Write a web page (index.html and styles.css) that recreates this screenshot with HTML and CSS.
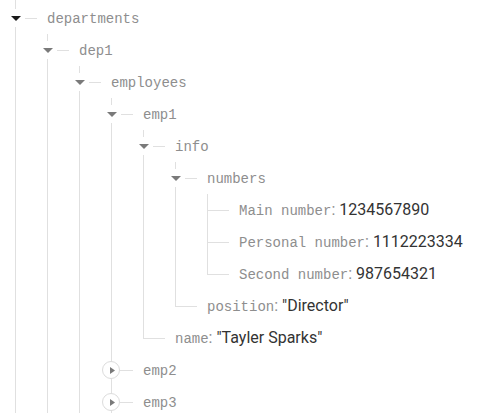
FILE: index.html
```html
<!DOCTYPE html>
<html lang="en">
<head>
<meta charset="utf-8">
<title>Database tree</title>
<link rel="stylesheet" href="styles.css">
</head>
<body>
<div class="tree">
  <div class="node">
    <div class="row">
      <span class="toggle open active"><svg width="10" height="5" viewBox="0 0 10 5"><polygon points="0,0 10,0 5,5"/></svg></span><span class="dash"></span>
      <span class="label"><span class="key">departments</span></span>
    </div>
    <div class="children">
      <div class="node">
        <div class="row">
          <span class="toggle open"><svg width="10" height="5" viewBox="0 0 10 5"><polygon points="0,0 10,0 5,5"/></svg></span><span class="dash"></span>
          <span class="label"><span class="key">dep1</span></span>
        </div>
        <div class="children">
          <div class="node">
            <div class="row">
              <span class="toggle open"><svg width="10" height="5" viewBox="0 0 10 5"><polygon points="0,0 10,0 5,5"/></svg></span><span class="dash"></span>
              <span class="label"><span class="key">employees</span></span>
            </div>
            <div class="children">
              <div class="node">
                <div class="row">
                  <span class="toggle open"><svg width="10" height="5" viewBox="0 0 10 5"><polygon points="0,0 10,0 5,5"/></svg></span><span class="dash"></span>
                  <span class="label"><span class="key">emp1</span></span>
                </div>
                <div class="children">
                  <div class="node">
                    <div class="row">
                      <span class="toggle open"><svg width="10" height="5" viewBox="0 0 10 5"><polygon points="0,0 10,0 5,5"/></svg></span><span class="dash"></span>
                      <span class="label"><span class="key">info</span></span>
                    </div>
                    <div class="children">
                      <div class="node">
                        <div class="row">
                          <span class="toggle open"><svg width="10" height="5" viewBox="0 0 10 5"><polygon points="0,0 10,0 5,5"/></svg></span><span class="dash"></span>
                          <span class="label"><span class="key">numbers</span></span>
                        </div>
                        <div class="children">
                          <div class="node">
                            <div class="row">
                              <span class="leaf"></span>
                              <span class="label"><span class="key">Main number</span><span class="colon">:</span> <span class="value">1234567890</span></span>
                            </div>
                          </div>
                          <div class="node">
                            <div class="row">
                              <span class="leaf"></span>
                              <span class="label"><span class="key">Personal number</span><span class="colon">:</span> <span class="value">1112223334</span></span>
                            </div>
                          </div>
                          <div class="node last">
                            <div class="row">
                              <span class="leaf"></span>
                              <span class="label"><span class="key">Second number</span><span class="colon">:</span> <span class="value">987654321</span></span>
                            </div>
                          </div>
                        </div>
                      </div>
                      <div class="node last">
                        <div class="row">
                          <span class="leaf"></span>
                          <span class="label"><span class="key">position</span><span class="colon">:</span> <span class="value">"Director"</span></span>
                        </div>
                      </div>
                    </div>
                  </div>
                  <div class="node last">
                    <div class="row">
                      <span class="leaf"></span>
                      <span class="label"><span class="key">name</span><span class="colon">:</span> <span class="value">"Tayler Sparks"</span></span>
                    </div>
                  </div>
                </div>
              </div>
              <div class="node">
                <div class="row">
                  <span class="toggle closed"><svg width="5" height="7" viewBox="0 0 5 7"><polygon points="0,0 5,3.5 0,7"/></svg></span><span class="dash long"></span>
                  <span class="label"><span class="key">emp2</span></span>
                </div>
              </div>
              <div class="node">
                <div class="row">
                  <span class="toggle closed"><svg width="5" height="7" viewBox="0 0 5 7"><polygon points="0,0 5,3.5 0,7"/></svg></span><span class="dash long"></span>
                  <span class="label"><span class="key">emp3</span></span>
                </div>
              </div>
            </div>
          </div>
        </div>
      </div>
    </div>
  </div>
</div>
</body>
</html>
```
FILE: styles.css
```css
html, body {
  margin: 0;
  padding: 0;
  background: #ffffff;
  height: 413px;
  overflow: hidden;
}

.tree {
  padding: 2px 0 0 15px;
  background: linear-gradient(#e0e0e0, #e0e0e0) no-repeat 15px 0 / 1px 2px;
}

.node {
  background: linear-gradient(#e0e0e0, #e0e0e0) no-repeat 0 0 / 1px 100%;
}

.node.last {
  background-size: 1px 17px;
}

.children {
  margin-left: 32px;
}

.row {
  height: 32px;
  display: flex;
  align-items: center;
}

.toggle {
  width: 18px;
  height: 18px;
  margin-left: -9px;
  background: #ffffff;
  display: flex;
  align-items: center;
  justify-content: center;
  flex: none;
  box-sizing: border-box;
}

.toggle.open svg {
  fill: #7a7a7a;
  margin-left: 1px;
}

.toggle.open.active svg {
  fill: #1a1a1a;
}

.toggle.closed {
  border: 1px solid #dcdcdc;
  border-radius: 50%;
}

.toggle.closed svg {
  fill: #7a7a7a;
  margin-left: 2px;
}

.dash {
  width: 12px;
  height: 1px;
  margin-left: 1px;
  background: #e0e0e0;
  flex: none;
}

.dash.long {
  width: 13px;
  margin-left: 0;
}

.leaf {
  width: 22px;
  height: 1px;
  background: #e0e0e0;
  flex: none;
}

.label {
  margin-left: 10px;
  margin-bottom: 2px;
  white-space: nowrap;
  font-family: Roboto, "Liberation Sans", sans-serif;
  font-size: 16px;
  color: #333333;
}

.key {
  font-family: "Liberation Mono", "DejaVu Sans Mono", monospace;
  font-size: 14px;
  color: #8e8e8e;
}

.colon {
  color: #8e8e8e;
}

.value {
  color: #333333;
}
```
